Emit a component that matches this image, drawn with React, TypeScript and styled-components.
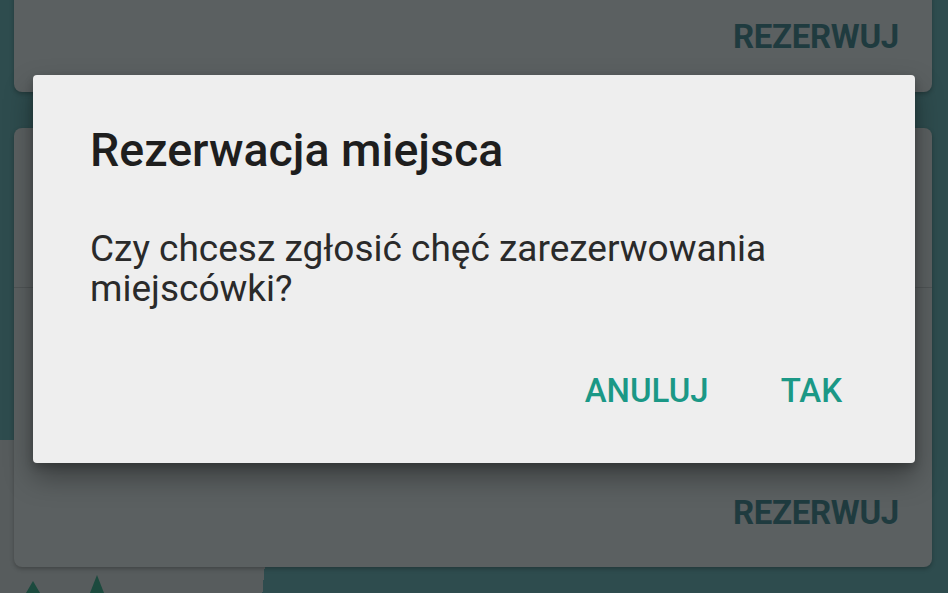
import React from "react";
import styled, { createGlobalStyle } from "styled-components";

const Global = createGlobalStyle`
  html, body { margin: 0; padding: 0; background: #2e4c4e; }
  body { font-family: Roboto, "Noto Sans", Arial, sans-serif; }
  * { box-sizing: border-box; }
`;

const Screen = styled.div`
  position: relative;
  width: 948px;
  height: 593px;
  overflow: hidden;
  background-color: #2e4c4e;
  background-image: linear-gradient(95deg, #575c5d 0 94%, transparent 94%);
  background-size: 280px 153px;
  background-position: left bottom;
  background-repeat: no-repeat;
  display: flex;
  flex-direction: column;
`;

const CardList = styled.div`
  display: flex;
  flex-direction: column;
  gap: 36px;
  padding: 0 16px 0 14px;
  margin-top: -10px;
`;

const Card = styled.div<{ $height: number }>`
  height: ${(p) => p.$height}px;
  background: #5b6061;
  border-radius: 8px;
  box-shadow: 0 2px 4px rgba(0, 0, 0, 0.25);
  display: flex;
  flex-direction: column;
  justify-content: flex-end;
`;

const CardBody = styled.div`
  flex: 1;
  display: flex;
  flex-direction: column;
`;

const Divider = styled.div<{ $top: number }>`
  margin-top: ${(p) => p.$top}px;
  height: 1px;
  background: rgba(0, 0, 0, 0.12);
`;

const ActionRow = styled.div<{ $bottom: number }>`
  display: flex;
  justify-content: flex-end;
  padding: 0 33px ${(p) => p.$bottom}px 0;
`;

const CardAction = styled.span`
  font-family: Roboto, Arial, sans-serif;
  font-weight: 700;
  font-size: 33px;
  line-height: 32px;
  letter-spacing: -0.3px;
  color: #1f3b3f;
`;

const Footer = styled.div`
  flex: 1;
  display: flex;
  align-items: flex-end;
  padding-left: 26px;
`;

const Scrim = styled.div`
  position: absolute;
  inset: 0;
  pointer-events: none;
`;

const Dialog = styled.div`
  position: absolute;
  left: 33px;
  top: 75px;
  width: 882px;
  height: 388px;
  background: #eeeeee;
  border-radius: 4px;
  box-shadow: 0 14px 28px rgba(0, 0, 0, 0.35), 0 4px 8px rgba(0, 0, 0, 0.2);
  display: flex;
  flex-direction: column;
  padding: 51px 57px 0 57px;
`;

const Title = styled.h2`
  margin: 0;
  font-family: Roboto, Arial, sans-serif;
  font-weight: 500;
  font-size: 46.5px;
  line-height: 48px;
  color: #1e1e1e;
`;

const Message = styled.p`
  margin: 55px 0 0 0;
  font-family: Roboto, Arial, sans-serif;
  font-weight: 400;
  font-size: 37px;
  line-height: 40px;
  color: #2a2a2a;
  max-width: 740px;
`;

const Buttons = styled.div`
  margin-top: auto;
  margin-bottom: 54px;
  display: flex;
  justify-content: flex-end;
  gap: 72px;
  padding-right: 16px;
`;

const DialogButton = styled.button`
  border: none;
  background: transparent;
  padding: 0;
  font-family: Roboto, Arial, sans-serif;
  font-weight: 500;
  font-size: 33px;
  line-height: 36px;
  color: #1b9886;
  cursor: pointer;
`;

export default function App() {
  return (
    <>
      <Global />
      <Screen>
        <CardList>
          <Card $height={102}>
            <ActionRow $bottom={39}>
              <CardAction>REZERWUJ</CardAction>
            </ActionRow>
          </Card>
          <Card $height={439}>
            <CardBody>
              <Divider $top={159} />
            </CardBody>
            <ActionRow $bottom={38}>
              <CardAction>REZERWUJ</CardAction>
            </ActionRow>
          </Card>
        </CardList>
        <Footer>
          <svg width="90" height="18" viewBox="0 0 90 18">
            <path d="M0 18 L7 6 L14 18 Z" fill="#1c4a3e" />
            <path d="M64 18 L71 0 L78 18 Z" fill="#1c4a3e" />
          </svg>
        </Footer>
        <Scrim>
          <Dialog role="dialog">
            <Title>Rezerwacja miejsca</Title>
            <Message>Czy chcesz zgłosić chęć zarezerwowania miejscówki?</Message>
            <Buttons>
              <DialogButton>ANULUJ</DialogButton>
              <DialogButton>TAK</DialogButton>
            </Buttons>
          </Dialog>
        </Scrim>
      </Screen>
    </>
  );
}
